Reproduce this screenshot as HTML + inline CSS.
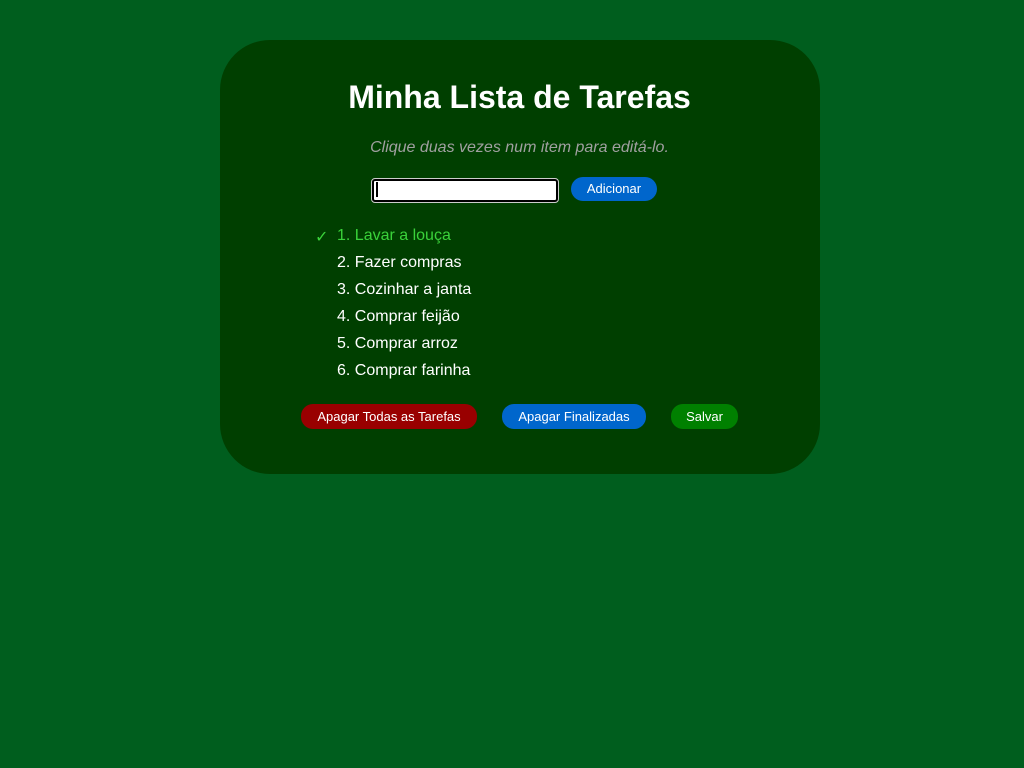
<!DOCTYPE html>
<html><head><meta charset="utf-8"><style>
body{margin:0;width:1024px;height:768px;background:#005e1e;font-family:"Liberation Sans",sans-serif;position:relative;overflow:hidden}
.card{position:absolute;left:220px;top:40px;width:600px;height:434px;background:#003f00;border-radius:50px}
.a{position:absolute;white-space:nowrap}
h1{position:absolute;margin:0;left:0;width:1039px;text-align:center;top:79px;font-size:32px;color:#fff;font-weight:bold}
.sub{left:0;width:1039px;text-align:center;top:139px;font-size:16px;font-style:italic;color:#a0a0a0}
.inp{left:372px;top:179px;width:182px;height:19px;background:#fff;border:2px solid #000;outline:1px solid #ccc;border-radius:3px}
.caret{left:376px;top:182px;width:2px;height:15px;background:#000}
.btn{height:25px;line-height:25px;border-radius:12px;color:#fff;font-size:13px;text-align:center}
.li{left:337px;font-size:16px;color:#fff}
</style></head><body>
<div class="card"></div>
<h1>Minha Lista de Tarefas</h1>
<div class="a sub">Clique duas vezes num item para editá-lo.</div>
<div class="a inp"></div><div class="a caret"></div>
<div class="a btn" style="left:571px;top:177px;width:86px;height:24px;line-height:24px;background:#0066cc">Adicionar</div>
<div class="a" style="left:315px;top:227px;font-size:16px;color:#3ad23a">✓</div>
<div class="a li" style="top:227px;color:#3ad23a">1. Lavar a louça</div>
<div class="a li" style="top:254px">2. Fazer compras</div>
<div class="a li" style="top:281px">3. Cozinhar a janta</div>
<div class="a li" style="top:308px">4. Comprar feijão</div>
<div class="a li" style="top:335px">5. Comprar arroz</div>
<div class="a li" style="top:362px">6. Comprar farinha</div>
<div class="a btn" style="left:301px;top:404px;width:176px;background:#990000">Apagar Todas as Tarefas</div>
<div class="a btn" style="left:502px;top:404px;width:144px;background:#0066cc">Apagar Finalizadas</div>
<div class="a btn" style="left:671px;top:404px;width:67px;background:#008000">Salvar</div>
</body></html>
